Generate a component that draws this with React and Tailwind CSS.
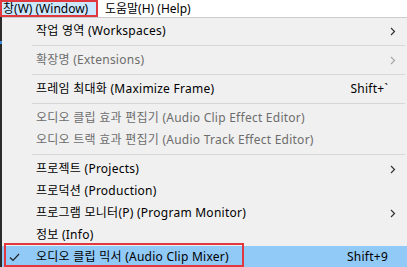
import React from "react";

const font = { fontFamily: '"Noto Sans", "Noto Sans CJK KR", sans-serif' };

function Arrow({ disabled }) {
  return (
    <svg width="6" height="9" viewBox="0 0 6 9" className="absolute right-[11px] top-[7px]">
      <path d="M1 1 L4.5 4.5 L1 8" fill="none" stroke={disabled ? "#a8a8a8" : "#333"} strokeWidth="1.2" />
    </svg>
  );
}

function Item({ label, disabled, arrow, shortcut, checked, highlight }) {
  return (
    <div
      className={`relative h-[22px] flex items-center text-[12px] leading-none tracking-[0.25px] ${
        highlight ? "bg-[#91c9f7]" : ""
      } ${disabled ? "text-[#6d6d6d]" : "text-[#000]"}`}
    >
      <div className="w-[34px] shrink-0 flex justify-center">
        {checked && (
          <svg width="11" height="9" viewBox="0 0 11 9" className="ml-[-9px]">
            <path d="M1 4.5 L4 7.5 L10 1" fill="none" stroke="#222" strokeWidth="1.2" />
          </svg>
        )}
      </div>
      <span className="whitespace-nowrap">{label}</span>
      {shortcut && <span className="absolute right-[19px] whitespace-nowrap">{shortcut}</span>}
      {arrow && <Arrow disabled={disabled} />}
    </div>
  );
}

function Sep() {
  return (
    <div className="h-[7px] flex items-center pl-[30px] pr-[2px]">
      <div className="h-px w-full bg-[#d7d7d7]" />
    </div>
  );
}

export default function App() {
  return (
    <div className="w-[407px] h-[267px] overflow-hidden bg-white relative" style={font}>
      <div className="h-[17px] flex items-center text-[12px] leading-none text-black">
        <div className="h-[17px] w-[98px] border-2 border-[#e0383e] bg-[#cce8ff] flex items-center pl-[1px] whitespace-nowrap">
          창(W) (Window)
        </div>
        <div className="pl-[7px] whitespace-nowrap">도움말(H) (Help)</div>
      </div>
      <div className="flex h-[250px]">
        <div className="w-[2px] bg-[#2b2b2b] relative">
          <div className="absolute left-0 top-[24px] w-[2px] h-[3px] bg-[#3c8ad8]" />
        </div>
        <div className="flex-1 bg-[#f0f0f0] border-t border-[#cccccc] pt-[2px]">
          <Item label="작업 영역 (Workspaces)" arrow />
          <Sep />
          <Item label="확장명 (Extensions)" arrow disabled />
          <Sep />
          <Item label="프레임 최대화 (Maximize Frame)" shortcut="Shift+`" />
          <Sep />
          <Item label="오디오 클립 효과 편집기 (Audio Clip Effect Editor)" disabled />
          <Item label="오디오 트랙 효과 편집기 (Audio Track Effect Editor)" disabled />
          <Sep />
          <Item label="프로젝트 (Projects)" arrow />
          <Item label="프로덕션 (Production)" />
          <Item label="프로그램 모니터(P) (Program Monitor)" arrow />
          <Item label="정보 (Info)" />
          <div className="relative">
            <Item label="오디오 클립 믹서 (Audio Clip Mixer)" shortcut="Shift+9" checked highlight />
            <div className="absolute left-[2px] top-[-3px] w-[240px] h-[24px] border-2 border-[#e0383e] pointer-events-none" />
          </div>
        </div>
      </div>
    </div>
  );
}
